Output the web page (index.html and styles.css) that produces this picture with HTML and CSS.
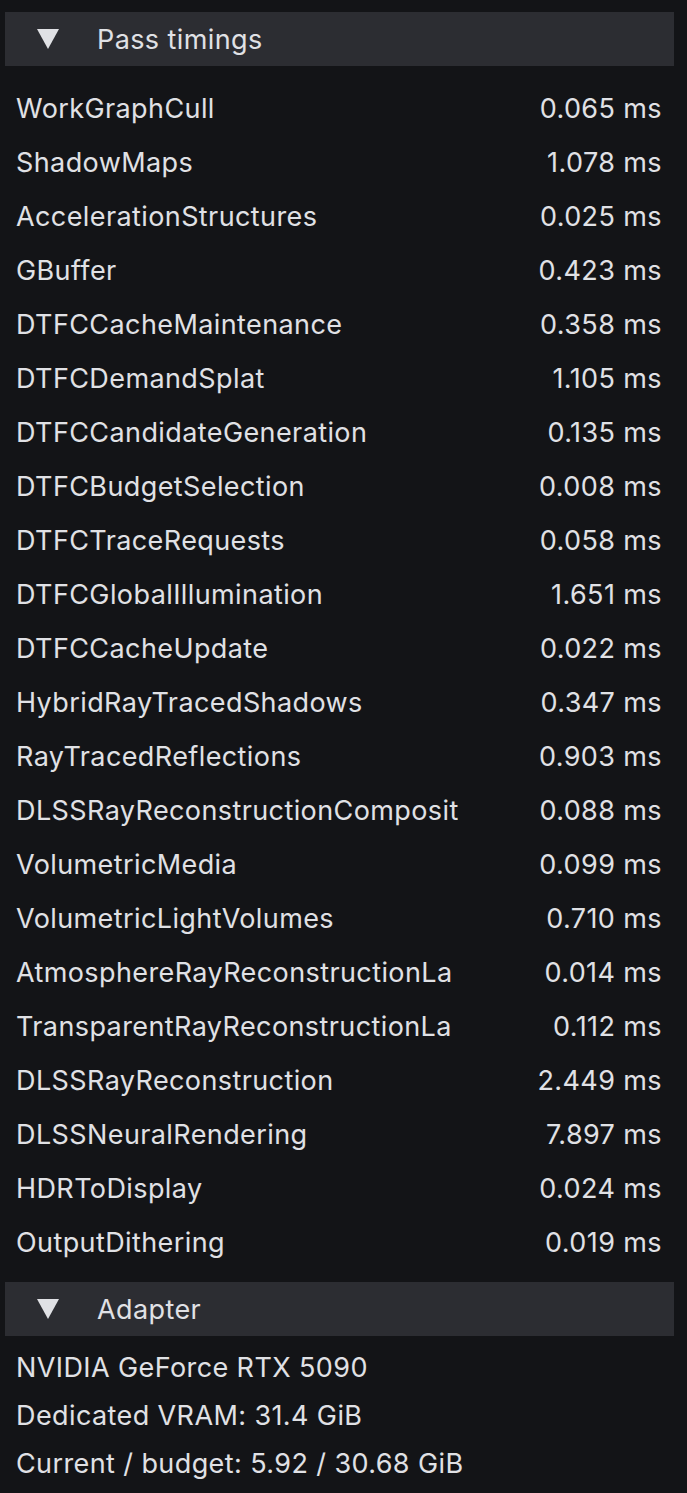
FILE: index.html
```html
<!DOCTYPE html>
<html lang="en">
<head>
    <meta charset="UTF-8">
    <meta name="viewport" content="width=device-width, initial-scale=1.0">
    <title>Stats</title>
    <link rel="stylesheet" href="styles.css">
</head>
<body>
    <div class="panel">
        <div class="section-header">
            <span class="arrow"></span>
            <span class="section-title">Pass timings</span>
        </div>
        <div class="timings">
            <div class="row"><span class="name">WorkGraphCull</span><span class="value">0.065 ms</span></div>
            <div class="row"><span class="name">ShadowMaps</span><span class="value">1.078 ms</span></div>
            <div class="row"><span class="name">AccelerationStructures</span><span class="value">0.025 ms</span></div>
            <div class="row"><span class="name">GBuffer</span><span class="value">0.423 ms</span></div>
            <div class="row"><span class="name">DTFCCacheMaintenance</span><span class="value">0.358 ms</span></div>
            <div class="row"><span class="name">DTFCDemandSplat</span><span class="value">1.105 ms</span></div>
            <div class="row"><span class="name">DTFCCandidateGeneration</span><span class="value">0.135 ms</span></div>
            <div class="row"><span class="name">DTFCBudgetSelection</span><span class="value">0.008 ms</span></div>
            <div class="row"><span class="name">DTFCTraceRequests</span><span class="value">0.058 ms</span></div>
            <div class="row"><span class="name">DTFCGlobalIllumination</span><span class="value">1.651 ms</span></div>
            <div class="row"><span class="name">DTFCCacheUpdate</span><span class="value">0.022 ms</span></div>
            <div class="row"><span class="name">HybridRayTracedShadows</span><span class="value">0.347 ms</span></div>
            <div class="row"><span class="name">RayTracedReflections</span><span class="value">0.903 ms</span></div>
            <div class="row"><span class="name">DLSSRayReconstructionComposit</span><span class="value">0.088 ms</span></div>
            <div class="row"><span class="name">VolumetricMedia</span><span class="value">0.099 ms</span></div>
            <div class="row"><span class="name">VolumetricLightVolumes</span><span class="value">0.710 ms</span></div>
            <div class="row"><span class="name">AtmosphereRayReconstructionLa</span><span class="value">0.014 ms</span></div>
            <div class="row"><span class="name">TransparentRayReconstructionLa</span><span class="value">0.112 ms</span></div>
            <div class="row"><span class="name">DLSSRayReconstruction</span><span class="value">2.449 ms</span></div>
            <div class="row"><span class="name">DLSSNeuralRendering</span><span class="value">7.897 ms</span></div>
            <div class="row"><span class="name">HDRToDisplay</span><span class="value">0.024 ms</span></div>
            <div class="row"><span class="name">OutputDithering</span><span class="value">0.019 ms</span></div>
        </div>

        <div class="section-header">
            <span class="arrow"></span>
            <span class="section-title">Adapter</span>
        </div>
        <div class="adapter">
            <div class="line">NVIDIA GeForce RTX 5090</div>
            <div class="line">Dedicated VRAM: 31.4 GiB</div>
            <div class="line">Current / budget: 5.92 / 30.68 GiB</div>
        </div>
    </div>
</body>
</html>
```

FILE: styles.css
```css
* {
    margin: 0;
    padding: 0;
    box-sizing: border-box;
}

body {
    font-family: Inter, 'Noto Sans', sans-serif;
    font-size: 27px;
    letter-spacing: 0.4px;
    background: #131417;
    color: #e0e1e5;
    height: 1493px;
    overflow: hidden;
}

.panel {
    padding: 12px 13px 0 5px;
}

/* collapsible header bar */
.section-header {
    display: flex;
    align-items: center;
    height: 54px;
    background: #2c2d32;
}

.arrow {
    width: 0;
    height: 0;
    margin-left: 32px;
    border-left: 11.5px solid transparent;
    border-right: 11.5px solid transparent;
    border-top: 20px solid #e0e1e5;
}

.section-title {
    margin-left: 38px;
}

.timings {
    padding: 15px 0 13px;
}

.row {
    display: flex;
    align-items: center;
    height: 54px;
    padding: 0 12px 0 11px;
}

/* long pass names are clipped at the column edge */
.name {
    width: 442px;
    overflow: hidden;
    white-space: nowrap;
}

.value {
    flex: 1;
    text-align: right;
    white-space: nowrap;
}

.adapter {
    padding: 8px 0 0 11px;
}

.line {
    height: 48px;
    line-height: 48px;
    white-space: nowrap;
}
```
